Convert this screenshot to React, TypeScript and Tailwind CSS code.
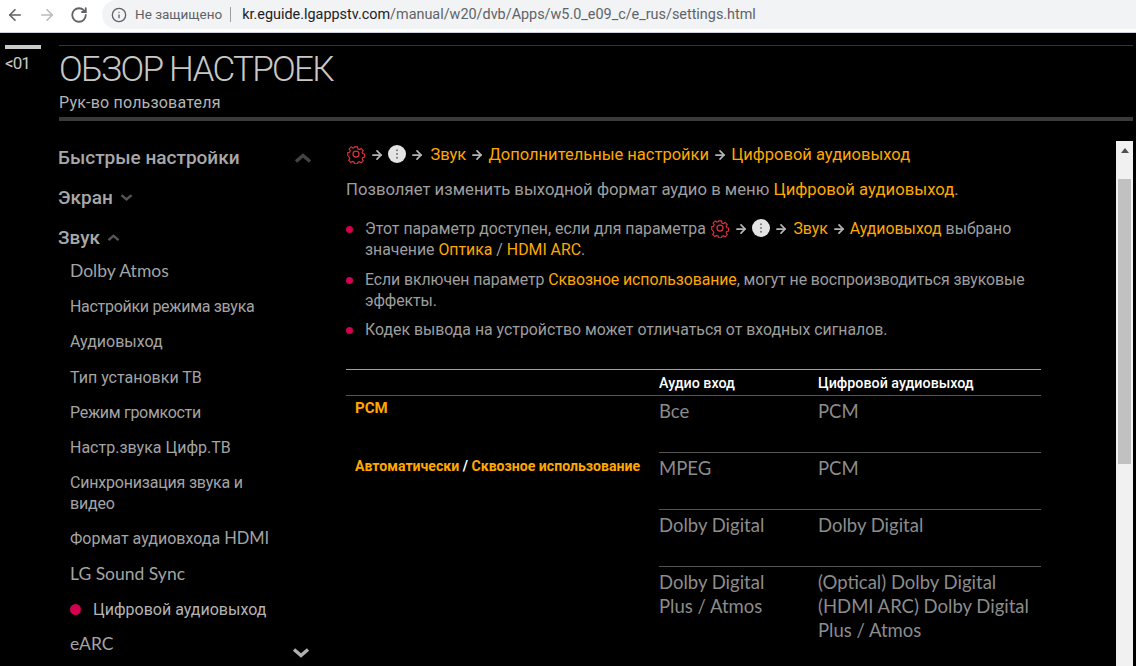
import { ArrowLeft, ArrowRight, Info, RotateCw } from 'lucide-react'

const Lat = ({ children, size = 'text-[17.5px]' }: { children: React.ReactNode; size?: string }) => (
  <span className={`font-['Lato',sans-serif] leading-none ${size}`}>{children}</span>
)

const subItems = [
  { key: 'atmos', label: <Lat>Dolby Atmos</Lat>, cls: '' },
  { key: 'mode', label: 'Настройки режима звука', cls: 'tracking-[-0.3px]' },
  { key: 'out', label: 'Аудиовыход', cls: '' },
  { key: 'type', label: 'Тип установки ТВ', cls: '' },
  { key: 'vol', label: 'Режим громкости', cls: 'tracking-[-0.3px]' },
  { key: 'dtv', label: 'Настр.звука Цифр.ТВ', cls: '' },
  { key: 'sync', label: 'Синхронизация звука и видео', cls: 'tracking-[-0.2px]' },
  { key: 'hdmi', label: <>Формат аудиовхода <Lat size="text-[16.5px]">HDMI</Lat></>, cls: '' },
  { key: 'lg', label: <Lat>LG Sound Sync</Lat>, cls: '' },
]

const rows = [
  { left: <b className="font-bold text-[15px] text-[#ffa800]">PCM</b>, input: 'Все', output: 'PCM', h: 'h-[57px]', pt: 'pt-[2px]' },
  {
    left: (
      <b className="font-bold text-[14.1px] text-[#ffa800]">
        Автоматически <span className="text-white">/</span> Сквозное использование
      </b>
    ),
    input: 'MPEG',
    output: 'PCM',
    h: 'h-[57px]',
    pt: 'pt-[3px]',
  },
  { left: null, input: 'Dolby Digital', output: 'Dolby Digital', h: 'h-[57px]', pt: '' },
  {
    left: null,
    input: 'Dolby Digital Plus / Atmos',
    output: '(Optical) Dolby Digital (HDMI ARC) Dolby Digital Plus / Atmos',
    h: 'h-[100px]',
    pt: '',
  },
]

function Gear() {
  return (
    <svg width="20" height="20" viewBox="0 0 24 24" fill="none" stroke="#e0323c" strokeWidth="1.5" className="inline-block align-[-4px]">
      <path d="M10 2.5h4l.6 2.8 1.9.8 2.4-1.5 2.8 2.8-1.5 2.4.8 1.9 2.5.3v4l-2.5.6-.8 1.9 1.5 2.4-2.8 2.8-2.4-1.5-1.9.8-.6 2.2h-4l-.6-2.5-1.9-.8-2.4 1.5-2.8-2.8 1.5-2.4-.8-1.9L1 14v-4l2.5-.4.8-1.9-1.5-2.4 2.8-2.8 2.4 1.5 1.9-.8z" transform="translate(1.2 1.2) scale(0.9)" />
      <circle cx="12" cy="12" r="3.6" />
    </svg>
  )
}

function Dots() {
  return (
    <svg width="18" height="18" viewBox="0 0 18 18" className="inline-block align-[-3px]">
      <circle cx="9" cy="9" r="9" fill="#e4e4e4" />
      <circle cx="9" cy="5.2" r="1" fill="#777" />
      <circle cx="9" cy="9" r="1" fill="#777" />
      <circle cx="9" cy="12.8" r="1" fill="#777" />
    </svg>
  )
}

function Arrow() {
  return <ArrowRight size={14} strokeWidth={3} className="inline-block align-[-2px] text-[#b5b5b5]" />
}

function Chevron({ up, size = 'w-[13px]', color = '#555' }: { up?: boolean; size?: string; color?: string }) {
  return (
    <svg viewBox="0 0 18 10" fill="none" stroke={color} strokeWidth="3.4" className={`${size} ${up ? '' : 'rotate-180'}`}>
      <path d="M2 8.5l7-6 7 6" />
    </svg>
  )
}

const Hl = ({ children, className = '' }: { children: React.ReactNode; className?: string }) => (
  <span className={`text-[#ffa800] ${className}`}>{children}</span>
)

export default function App() {
  return (
    <div className="w-[1136px] h-[666px] overflow-hidden flex flex-col bg-black font-['Roboto',sans-serif]">
      <div className="h-[33px] shrink-0 bg-white flex items-center pb-[3px] border-b border-[#c8d0dc]">
        <div className="flex items-center pl-[6px] gap-[14px] text-[#5f6368]">
          <ArrowLeft size={18} strokeWidth={2.2} />
          <ArrowRight size={18} strokeWidth={2.2} className="text-[#b8babd]" />
          <RotateCw size={18} strokeWidth={2.4} />
        </div>
        <div className="ml-[14px] flex-1 h-[29px] rounded-l-full bg-[#f1f3f4] flex items-center pl-[9px]">
          <Info size={16} className="text-[#5f6368]" />
          <span className="ml-[8px] text-[#5f6368] text-[13.5px]">Не защищено</span>
          <span className="ml-[8px] mr-[11px] w-px h-[15px] bg-[#9aa0a6]" />
          <span className="text-[14.4px] text-[#5f6368]">
            <span className="text-[#202124]">kr.eguide.lgappstv.com</span>/manual/w20/dvb/Apps/w5.0_e09_c/e_rus/settings.html
          </span>
        </div>
      </div>

      <div className="flex-1 flex min-h-0">
        <div className="w-[59px] shrink-0 pl-[5px] pt-[12px]">
          <div className="w-[36px] h-[4px] bg-[#c9c9c9]" />
          <div className="mt-[5px] text-[17px] leading-[18px] text-[#c8c8c8] tracking-[-1px]">&lt;01</div>
        </div>

        <div className="flex-1 min-w-0 flex flex-col">
          <div className="mt-[12px] border-t border-[#333] mr-[3px] shrink-0">
            <h1 className="mt-[3px] text-[35px] leading-[42px] font-light text-[#c8c8c8] tracking-[-1.7px]">ОБЗОР НАСТРОЕК</h1>
            <div className="mt-[2px] text-[16px] leading-[20px] text-[#b4b4b4] tracking-[0.2px]">Рук-во пользователя</div>
            <div className="mt-[4px] h-[4px] bg-[#3a3a3a]" />
          </div>

          <div className="flex-1 flex min-h-0">
            <div className="relative w-[287px] shrink-0 pt-[25px] text-[#b4b4b4]">
              <div className="flex items-center justify-between -ml-[1px] pr-[34px] h-[24px] text-[19px] font-medium text-[#a8a8a8]">
                Быстрые настройки
                <Chevron up size="w-[18px]" color="#444" />
              </div>
              <div className="flex items-center gap-[7px] -ml-[1px] mt-[16px] h-[24px] text-[19px] font-medium text-[#a8a8a8]">
                Экран
                <Chevron />
              </div>
              <div className="flex items-center gap-[7px] -ml-[1px] mt-[16px] h-[24px] text-[19px] font-medium text-[#a8a8a8]">
                Звук
                <Chevron up />
              </div>
              <ul className="mt-[4px] pl-[11px] max-w-[221px] text-[16px] leading-[21px] text-[#a4a4a4]">
                {subItems.map(t => (
                  <li key={t.key} className={`py-[7.1px] ${t.cls}`}>{t.label}</li>
                ))}
                <li className="py-[7.1px] flex items-center">
                  <span className="w-[11px] h-[11px] rounded-full bg-[#d4004f] mr-[12px]" />
                  <span className="text-[#b4b4b4]">Цифровой аудиовыход</span>
                </li>
                <li className="py-[7.1px]"><Lat>eARC</Lat></li>
              </ul>
              <div className="absolute right-[36px] bottom-[8px]">
                <Chevron size="w-[18px]" color="#b0b0b0" />
              </div>
            </div>

            <div className="w-[695px] shrink-0 pt-[23px] text-[15.85px] leading-[21px] text-[#9e9e9e]">
              <div className="text-[16.5px] leading-[22px] text-[#ffa800]">
                <Gear /> <Arrow /> <Dots /> <Arrow /> <span className="ml-[2px]">Звук</span> <Arrow /> Дополнительные настройки <Arrow /> Цифровой аудиовыход
              </div>
              <p className="mt-[13px] text-[16.7px] leading-[22px]">
                Позволяет изменить выходной формат аудио в меню <Hl>Цифровой аудиовыход</Hl>.
              </p>
              <ul className="mt-[17px] space-y-[9px]">
                <li className="flex">
                  <span className="mt-[8px] w-[7px] h-[7px] rounded-full bg-[#d4004f] shrink-0 mr-[12px]" />
                  <span>
                    Этот параметр доступен, если для параметра <Gear /> <Arrow /> <Dots /> <Arrow /> <Hl className="ml-[2px]">Звук</Hl> <Arrow /> <Hl>Аудиовыход</Hl> выбрано значение <Hl>Оптика</Hl> / <Hl>HDMI ARC</Hl>.
                  </span>
                </li>
                <li className="flex">
                  <span className="mt-[8px] w-[7px] h-[7px] rounded-full bg-[#d4004f] shrink-0 mr-[12px]" />
                  <span className="tracking-[-0.08px]">
                    Если включен параметр <Hl>Сквозное использование</Hl>, могут не воспроизводиться звуковые эффекты.
                  </span>
                </li>
                <li className="flex -mt-[1px]">
                  <span className="mt-[8px] w-[7px] h-[7px] rounded-full bg-[#d4004f] shrink-0 mr-[12px]" />
                  <span>Кодек вывода на устройство может отличаться от входных сигналов.</span>
                </li>
              </ul>

              <div className="mt-[29px] border-t border-[#a0a0a0]">
                <div className="flex h-[26px] items-center pt-[2px] border-b border-[#555] text-[14.3px] font-medium text-white">
                  <div className="w-[313px]" />
                  <div className="w-[159px]">Аудио вход</div>
                  <div>Цифровой аудиовыход</div>
                </div>
                {rows.map((r, i) => (
                  <div key={i} className={`flex ${r.h}`}>
                    <div className={`w-[313px] pl-[9px] ${r.pt} leading-[20px]`}>{r.left}</div>
                    <div className={`flex-1 flex pt-[3px] text-[18.5px] leading-[24px] text-[#8c8c8c] font-['Lato',sans-serif] ${i < 3 ? 'border-b border-[#555]' : ''}`}>
                      <div className="w-[159px] pr-[30px]">{r.input}</div>
                      <div className="flex-1 pr-[10px]">{r.output}</div>
                    </div>
                  </div>
                ))}
              </div>
            </div>

            <div className="ml-[75px] mt-[20px] w-[17px] shrink-0 bg-[#f1f1f1] flex flex-col">
              <svg viewBox="0 0 8 5" fill="#505050" className="w-[8px] mx-auto mt-[7px]">
                <path d="M4 0l4 5H0z" />
              </svg>
              <div className="mt-[26px] mx-[2px] h-[285px] bg-[#c1c1c1]" />
            </div>
          </div>
        </div>
      </div>
    </div>
  )
}
